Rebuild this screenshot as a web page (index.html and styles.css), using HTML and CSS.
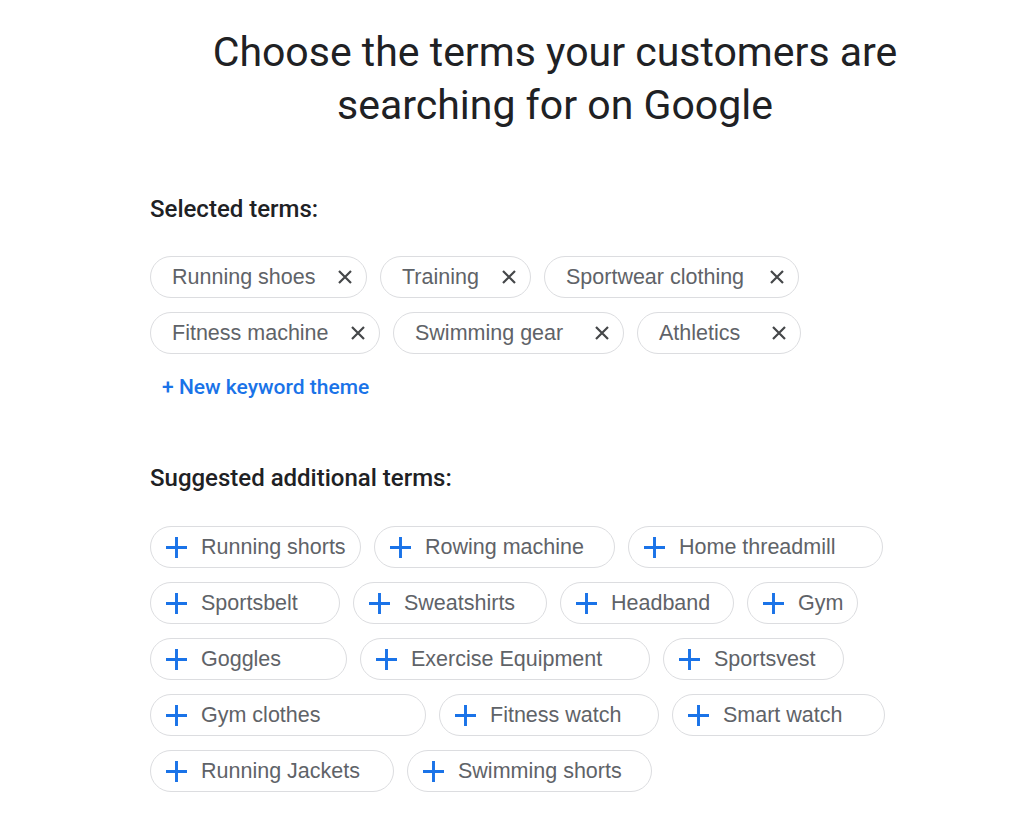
FILE: index.html
```html
<!DOCTYPE html>
<html lang="en">
<head>
  <meta charset="UTF-8" />
  <meta name="viewport" content="width=device-width, initial-scale=1" />
  <title>Choose keyword themes</title>
  <link rel="stylesheet" href="styles.css">
</head>
<body>

  <main class="page">
    <h1 class="title">Choose the terms your customers are<br>searching for on Google</h1>

    <section class="group">
      <h2 class="group-label">Selected terms:</h2>

      <div class="chip-rows">
        <div class="chip-row">
          <span class="chip chip-selected" style="--w:217px">Running shoes<span class="chip-x"><svg viewBox="0 0 16 16"><path d="M2 2L14 14M14 2L2 14"/></svg></span></span>
          <span class="chip chip-selected" style="--w:151px">Training<span class="chip-x"><svg viewBox="0 0 16 16"><path d="M2 2L14 14M14 2L2 14"/></svg></span></span>
          <span class="chip chip-selected" style="--w:255px">Sportwear clothing<span class="chip-x"><svg viewBox="0 0 16 16"><path d="M2 2L14 14M14 2L2 14"/></svg></span></span>
        </div>
        <div class="chip-row">
          <span class="chip chip-selected" style="--w:230px">Fitness machine<span class="chip-x"><svg viewBox="0 0 16 16"><path d="M2 2L14 14M14 2L2 14"/></svg></span></span>
          <span class="chip chip-selected" style="--w:231px">Swimming gear<span class="chip-x"><svg viewBox="0 0 16 16"><path d="M2 2L14 14M14 2L2 14"/></svg></span></span>
          <span class="chip chip-selected" style="--w:164px">Athletics<span class="chip-x"><svg viewBox="0 0 16 16"><path d="M2 2L14 14M14 2L2 14"/></svg></span></span>
        </div>
      </div>

      <a class="new-theme" href="#">+ New keyword theme</a>
    </section>

    <section class="group group-suggested">
      <h2 class="group-label">Suggested additional terms:</h2>

      <div class="chip-rows">
        <div class="chip-row">
          <span class="chip chip-add" style="--w:211px"><svg class="plus" viewBox="0 0 20 20"><path d="M10 0V20M0 10H20"/></svg>Running shorts</span>
          <span class="chip chip-add" style="--w:241px"><svg class="plus" viewBox="0 0 20 20"><path d="M10 0V20M0 10H20"/></svg>Rowing machine</span>
          <span class="chip chip-add" style="--w:255px"><svg class="plus" viewBox="0 0 20 20"><path d="M10 0V20M0 10H20"/></svg>Home threadmill</span>
        </div>
        <div class="chip-row">
          <span class="chip chip-add" style="--w:190px"><svg class="plus" viewBox="0 0 20 20"><path d="M10 0V20M0 10H20"/></svg>Sportsbelt</span>
          <span class="chip chip-add" style="--w:194px"><svg class="plus" viewBox="0 0 20 20"><path d="M10 0V20M0 10H20"/></svg>Sweatshirts</span>
          <span class="chip chip-add" style="--w:174px"><svg class="plus" viewBox="0 0 20 20"><path d="M10 0V20M0 10H20"/></svg>Headband</span>
          <span class="chip chip-add" style="--w:111px"><svg class="plus" viewBox="0 0 20 20"><path d="M10 0V20M0 10H20"/></svg>Gym</span>
        </div>
        <div class="chip-row">
          <span class="chip chip-add" style="--w:197px"><svg class="plus" viewBox="0 0 20 20"><path d="M10 0V20M0 10H20"/></svg>Goggles</span>
          <span class="chip chip-add" style="--w:290px"><svg class="plus" viewBox="0 0 20 20"><path d="M10 0V20M0 10H20"/></svg>Exercise Equipment</span>
          <span class="chip chip-add" style="--w:181px"><svg class="plus" viewBox="0 0 20 20"><path d="M10 0V20M0 10H20"/></svg>Sportsvest</span>
        </div>
        <div class="chip-row">
          <span class="chip chip-add" style="--w:276px"><svg class="plus" viewBox="0 0 20 20"><path d="M10 0V20M0 10H20"/></svg>Gym clothes</span>
          <span class="chip chip-add" style="--w:220px"><svg class="plus" viewBox="0 0 20 20"><path d="M10 0V20M0 10H20"/></svg>Fitness watch</span>
          <span class="chip chip-add" style="--w:213px"><svg class="plus" viewBox="0 0 20 20"><path d="M10 0V20M0 10H20"/></svg>Smart watch</span>
        </div>
        <div class="chip-row">
          <span class="chip chip-add" style="--w:244px"><svg class="plus" viewBox="0 0 20 20"><path d="M10 0V20M0 10H20"/></svg>Running Jackets</span>
          <span class="chip chip-add" style="--w:245px"><svg class="plus" viewBox="0 0 20 20"><path d="M10 0V20M0 10H20"/></svg>Swimming shorts</span>
        </div>
      </div>
    </section>
  </main>

</body>
</html>
```

FILE: styles.css
```css
body {
  margin: 0;
  background: #fff;
  font-family: Roboto, "Liberation Sans", sans-serif;
  color: #202124;
}

.page {
  width: 810px;
  padding: 26px 0 30px 150px;
}

.title {
  margin: 0;
  text-align: center;
  font-size: 41px;
  font-weight: 400;
  line-height: 53px;
  color: #202124;
}

.group {
  margin-top: 63px;
}

.group-suggested {
  margin-top: 63px;
}

.group-label {
  margin: 0;
  font-size: 24px;
  font-weight: 500;
  line-height: 28px;
  color: #202124;
}

.chip-rows {
  display: flex;
  flex-direction: column;
  gap: 14px;
  margin-top: 33px;
}

.group-suggested .chip-rows {
  margin-top: 34px;
}

.chip-row {
  display: flex;
  gap: 13px;
}

.chip {
  box-sizing: border-box;
  display: flex;
  align-items: center;
  width: var(--w);
  height: 42px;
  border: 1.5px solid #dcdde0;
  border-radius: 21px;
  font-family: "Liberation Sans", Arial, sans-serif;
  font-size: 21.5px;
  color: #5f6368;
  white-space: nowrap;
}

.chip-selected {
  padding: 0 13px 0 21px;
}

.chip-x {
  margin-left: auto;
  display: flex;
}

.chip-x svg {
  width: 16px;
  height: 16px;
  fill: none;
  stroke: #454749;
  stroke-width: 2.2;
}

.chip-add {
  padding: 0 16px 0 15px;
}

.plus {
  width: 21px;
  height: 21px;
  margin-right: 14px;
  fill: none;
  stroke: #1a73e8;
  stroke-width: 2.8;
  flex-shrink: 0;
}

.new-theme {
  display: inline-block;
  margin: 19px 0 0 12px;
  font-size: 21px;
  font-weight: 500;
  line-height: 28px;
  color: #1a73e8;
  text-decoration: none;
}
```
